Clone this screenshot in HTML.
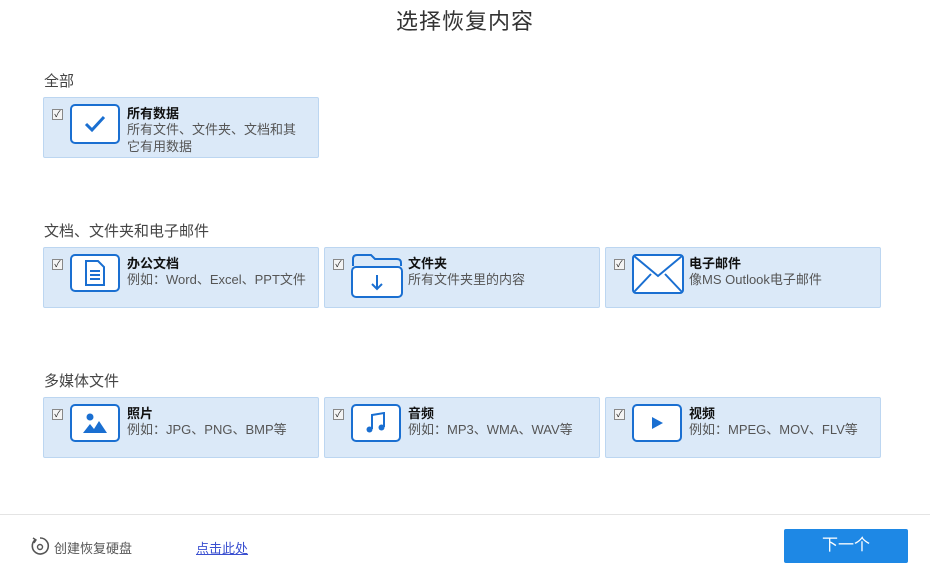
<!DOCTYPE html>
<html><head><meta charset="utf-8"><style>
*{margin:0;padding:0;box-sizing:border-box}
body{width:930px;height:569px;background:#fff;font-family:"Liberation Sans","Noto Sans CJK SC",sans-serif;position:relative;overflow:hidden;color:#333}
.t{position:absolute;left:0;width:930px;top:4px;text-align:center;font-size:22px;color:#333;letter-spacing:1px}
.h{position:absolute;left:44px;font-size:15px;color:#444}
.c{position:absolute;width:276px;height:61px;background:#dbe9f8;border:1px solid #bcd6f1;border-radius:2px}
.cb{position:absolute;left:8px;top:11px;width:11px;height:11px;border:1px solid #888;background:#f4f4f4;font-size:9px;line-height:9px;text-align:center;color:#222}
.ic{position:absolute;left:26px;top:6px;width:50px;height:38px;border:2px solid #1a6fd1;border-radius:5px;background:#fff;display:flex;align-items:center;justify-content:center}
.tt{position:absolute;left:83px;top:5px;font-size:13px;font-weight:bold;color:#111}
.st{position:absolute;left:83px;top:23px;font-size:13px;color:#555;line-height:17px;width:190px}
.foot{position:absolute;left:0;top:514px;width:930px;height:1px;background:#e4e4e4}
.btn{position:absolute;left:784px;top:529px;width:124px;height:34px;background:#1e88e5;color:#fff;font-size:16px;text-align:center;line-height:34px;border-radius:2px}
</style></head><body>
<div class="t">选择恢复内容</div>
<div class="h" style="top:70px">全部</div>
<div class="c" style="left:43px;top:97px">
 <div class="cb">✓</div>
 <div class="ic" style="height:40px"><svg width="24" height="20" viewBox="0 0 24 20"><path d="M3 10l6 6L21 3" stroke="#1a6fd1" stroke-width="3" fill="none"/></svg></div>
 <div class="tt">所有数据</div>
 <div class="st" style="width:172px">所有文件、文件夹、文档和其它有用数据</div>
</div>
<div class="h" style="top:220px">文档、文件夹和电子邮件</div>
<div class="c" style="left:43px;top:247px">
 <div class="cb">✓</div>
 <div class="ic"><svg width="22" height="28" viewBox="0 0 22 28"><path d="M2 2h12l6 6v18H2z" stroke="#1a6fd1" stroke-width="2" fill="none"/><path d="M6 12h10M6 16h10M6 20h10" stroke="#1a6fd1" stroke-width="2"/></svg></div>
 <div class="tt">办公文档</div>
 <div class="st">例如：Word、Excel、PPT文件</div>
</div>
<div class="c" style="left:324px;top:247px">
 <div class="cb">✓</div>
 <svg style="position:absolute;left:26px;top:5px" width="52" height="46" viewBox="0 0 52 46"><path d="M2 13V6q0-4 4-4h14l4 4h22q4 0 4 4v3" stroke="#1a6fd1" stroke-width="2" fill="none"/><rect x="1" y="14" width="50" height="30" rx="4" fill="#fff" stroke="#1a6fd1" stroke-width="2"/><path d="M26 22v14M21 31l5 5 5-5" stroke="#1a6fd1" stroke-width="2" fill="none"/></svg>
 <div class="tt">文件夹</div>
 <div class="st">所有文件夹里的内容</div>
</div>
<div class="c" style="left:605px;top:247px">
 <div class="cb">✓</div>
 <svg style="position:absolute;left:26px;top:6px" width="52" height="40" viewBox="0 0 52 40"><rect x="1" y="1" width="50" height="38" rx="3" fill="#fff" stroke="#1a6fd1" stroke-width="2"/><path d="M2 2l24 20L50 2M2 38l17-18M50 38L33 20" stroke="#1a6fd1" stroke-width="2" fill="none"/></svg>
 <div class="tt">电子邮件</div>
 <div class="st">像MS Outlook电子邮件</div>
</div>
<div class="h" style="top:370px">多媒体文件</div>
<div class="c" style="left:43px;top:397px">
 <div class="cb">✓</div>
 <div class="ic"><svg width="24" height="22" viewBox="0 0 24 22"><circle cx="7" cy="5" r="3.5" fill="#1a6fd1"/><path d="M0 21l7-9 4 5 5-8 8 12z" fill="#1a6fd1"/></svg></div>
 <div class="tt">照片</div>
 <div class="st">例如：JPG、PNG、BMP等</div>
</div>
<div class="c" style="left:324px;top:397px">
 <div class="cb">✓</div>
 <div class="ic"><svg width="20" height="22" viewBox="0 0 20 22"><path d="M6 17V3l12-2v14" stroke="#1a6fd1" stroke-width="2" fill="none"/><circle cx="3.5" cy="17.5" r="3" fill="#1a6fd1"/><circle cx="15.5" cy="15.5" r="3" fill="#1a6fd1"/></svg></div>
 <div class="tt">音频</div>
 <div class="st">例如：MP3、WMA、WAV等</div>
</div>
<div class="c" style="left:605px;top:397px">
 <div class="cb">✓</div>
 <div class="ic"><svg width="14" height="14" viewBox="0 0 14 14"><path d="M2 1l11 6-11 6z" fill="#1a6fd1"/></svg></div>
 <div class="tt">视频</div>
 <div class="st">例如：MPEG、MOV、FLV等</div>
</div>
<div class="foot"></div>
<svg style="position:absolute;left:30px;top:536px" width="20" height="20" viewBox="0 0 20 20"><path d="M5 4A8 8 0 1 0 10 2" stroke="#555" stroke-width="1.6" fill="none"/><path d="M3 2l3 2-2 3" stroke="#555" stroke-width="1.4" fill="none"/><circle cx="10" cy="11" r="2.5" stroke="#555" stroke-width="1.4" fill="none"/></svg>
<div style="position:absolute;left:54px;top:538px;font-size:13px;color:#555">创建恢复硬盘</div>
<div style="position:absolute;left:196px;top:538px;font-size:13px;color:#3a4fd0;text-decoration:underline">点击此处</div>
<div class="btn">下一个</div>
</body></html>
